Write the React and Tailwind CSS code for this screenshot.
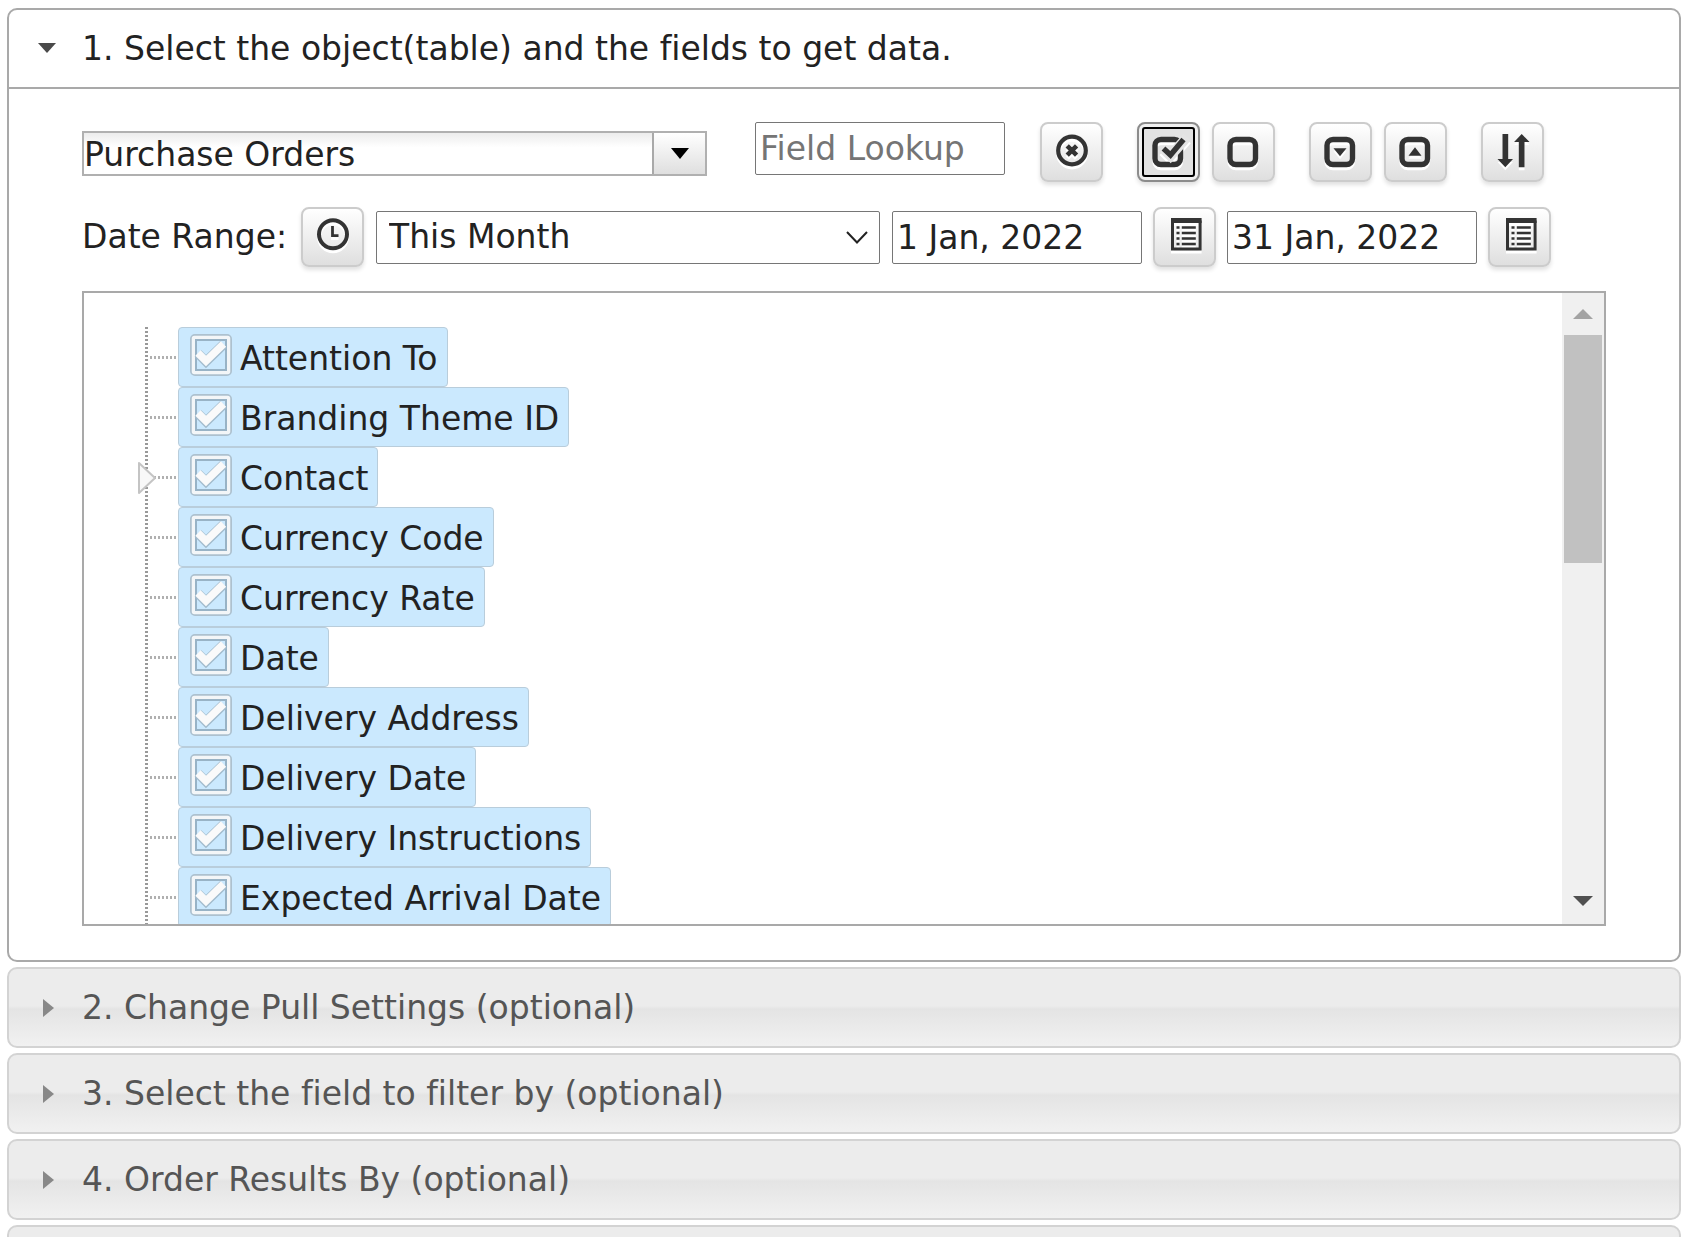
import { useRef, useState } from "react";
import clsx from "clsx";

const fields = [
  { name: "Attention To" },
  { name: "Branding Theme ID" },
  { name: "Contact", expandable: true },
  { name: "Currency Code" },
  { name: "Currency Rate" },
  { name: "Date" },
  { name: "Delivery Address" },
  { name: "Delivery Date" },
  { name: "Delivery Instructions" },
  { name: "Expected Arrival Date" },
];

const sections = [
  "2. Change Pull Settings (optional)",
  "3. Select the field to filter by (optional)",
  "4. Order Results By (optional)",
  "",
];

const icons = {
  clear: (
    <g fill="none" stroke="#333">
      <circle cx="18" cy="17.5" r="13.8" strokeWidth="4.2" />
      <path d="M13.2 12.8l9.400 9.400M22.600 12.800l-9.400 9.400" strokeWidth="4.6" />
    </g>
  ),
  checkAll: (
    <g fill="none">
      <rect x="4" y="6.5" width="25.5" height="25" rx="6" stroke="#333" strokeWidth="5.4" />
      <path d="M12 15.5l7.5 7.5L36 4" stroke="#e4e4e4" strokeWidth="10" />
      <path d="M12.5 15.5l7 6.5L32.5 6.5" stroke="#333" strokeWidth="5.5" />
    </g>
  ),
  uncheckAll: <rect x="4" y="6.5" width="25.5" height="25" rx="6" fill="none" stroke="#333" strokeWidth="5.4" />,
  expand: (
    <g>
      <rect x="4" y="6.5" width="25.5" height="25" rx="6" fill="none" stroke="#333" strokeWidth="5.4" />
      <path d="M10.5 15.3h13L17 23.3z" fill="#333" />
    </g>
  ),
  collapse: (
    <g>
      <rect x="4" y="6.5" width="25.5" height="25" rx="6" fill="none" stroke="#333" strokeWidth="5.4" />
      <path d="M10.5 22.7h13L17 14.3z" fill="#333" />
    </g>
  ),
  sort: (
    <path
      d="M7.5 1h5.7v25h4.8l-7.7 8.3L2.5 26h5zM23.8 34.3V9h-4.7l7.6-8 7.8 8h-5v25.3z"
      fill="#333"
    />
  ),
  clock: (
    <g fill="none" stroke="#333">
      <circle cx="18" cy="16.2" r="14" strokeWidth="4" />
      <path d="M17.5 8v9.7h6" strokeWidth="2.8" />
    </g>
  ),
  calendar: (
    <g fill="none" stroke="#333">
      <path d="M5.5 2.5v28.5h27.6V2.5" strokeWidth="3" />
      <path d="M4 2.5h30.600" strokeWidth="5" />
      <path d="M9.500 9.500h3M9.500 15h3M9.500 20.500h3M9.500 26h3" strokeWidth="2.6" />
      <path d="M14.800 9.500h14M14.800 15h14M14.800 20.500h14M14.800 26h14" strokeWidth="2.6" />
    </g>
  ),
};

function IconButton({ icon, label, active, onClick }) {
  return (
    <button
      type="button"
      aria-label={label}
      onClick={onClick}
      className={clsx(
        "flex h-[60px] w-[63px] shrink-0 items-center justify-center rounded-lg border-2 pb-[2px] shadow-[0_3px_4px_rgba(0,0,0,0.12)]",
        active
          ? "border-[#8c8c8c] bg-[#e2e2e2] outline-2 -outline-offset-[7px] outline-black inset-ring-3 inset-ring-[#f0f0f0]"
          : "border-[#cccccc] bg-linear-to-b from-white to-[#dfdfdf]"
      )}
    >
      <svg viewBox="0 0 36 36" className="size-9 overflow-visible drop-shadow-[0_3px_0_#ffffff]">
        {icons[icon]}
      </svg>
    </button>
  );
}

function TextBox({ className, ...props }) {
  return (
    <input
      type="text"
      className={clsx(
        "h-[53px] w-[250px] rounded-[2px] border border-[#767676] bg-white px-1 text-[#222222] placeholder:text-[#757575]",
        className
      )}
      {...props}
    />
  );
}

function CheckMark({ checked }) {
  return (
    <svg viewBox="0 1 42 42" className="pointer-events-none relative size-[42px] overflow-visible">
      <rect x="1" y="0" width="40" height="40" rx="4" fill="none" stroke="#adc1cf" strokeWidth="2" />
      <rect x="3.5" y="2.5" width="35" height="35" rx="1" fill="none" stroke="#f3f6f8" strokeWidth="3.5" />
      <rect x="6" y="5" width="30" height="30" fill="none" stroke="#98b3c6" strokeWidth="2" />
      {checked && (
        <g fill="none">
          <path d="M8 18.5l8 8 17.500-17" stroke="#a3bccd" strokeWidth="9.5" />
          <path d="M8 18l8 8L33.500 9" stroke="#fafafa" strokeWidth="7.5" />
        </g>
      )}
    </svg>
  );
}

function Field({ name, expandable, checked, onChange }) {
  return (
    <li className="relative flex h-[60px] items-center">
      <span className="w-[3px] self-stretch bg-[repeating-linear-gradient(to_bottom,#999999_0_2px,transparent_2px_4px)]" />
      <span className="h-[3px] w-[30px] bg-[repeating-linear-gradient(to_right,transparent_0_2px,#b0b0b0_2px_4px)]" />
      {expandable && (
        <button type="button" aria-label={`Expand ${name}`} className="absolute -left-2 top-3 h-9 w-5">
          <svg viewBox="0 0 20 36" className="h-9 w-5">
            <path d="M2 4v30L18 19z" fill="#f8f8f8" stroke="#c4c4c4" strokeWidth="2" strokeLinejoin="round" />
          </svg>
        </button>
      )}
      <label className="flex h-[60px] items-center gap-2 rounded border border-[#b9cddb] bg-[#cbe9fe] pr-[9px] pl-[11px]">
        <span className="relative size-[42px]">
          <input
            type="checkbox"
            checked={checked}
            onChange={onChange}
            className="absolute inset-0 size-full appearance-none"
          />
          <CheckMark checked={checked} />
        </span>
        <span className="pt-[3px]">{name}</span>
      </label>
    </li>
  );
}

function ScrollBar({ onStep }) {
  return (
    <div className="flex w-[42px] flex-col bg-[#f0f0f0]">
      <button type="button" aria-label="Scroll up" onClick={() => onStep(-60)} className="flex h-[42px] items-center justify-center">
        <svg viewBox="0 0 20 10" className="h-[10px] w-5">
          <path d="M0 10L10 0l10 10z" fill="#a3a3a3" />
        </svg>
      </button>
      <div className="flex-1 px-[2px]">
        <div className="h-[228px] bg-[#c1c1c1]" />
      </div>
      <button type="button" aria-label="Scroll down" onClick={() => onStep(60)} className="flex h-[42px] items-center justify-center pb-1">
        <svg viewBox="0 0 20 10" className="h-[10px] w-5">
          <path d="M0 0h20L10 10z" fill="#505050" />
        </svg>
      </button>
    </div>
  );
}

export default function App() {
  const [checked, setChecked] = useState(() => fields.map(() => true));
  const listRef = useRef(null);

  const toggle = (index) => setChecked(prev => prev.map((c, i) => (i === index ? !c : c)));
  const setAll = (value) => setChecked(fields.map(() => value));

  return (
    <div className="flex h-screen flex-col gap-[5px] overflow-hidden bg-white pt-2 pr-2 pl-[7px] font-['Verdana','DejaVu_Sans',sans-serif] text-[33px] leading-[40px] whitespace-nowrap text-[#222222] [font-variant-ligatures:none]">
      <section className="shrink-0 rounded-[10px] border-2 border-[#a9a9a9] bg-white">
        <h3 className="border-b-2 border-[#a9a9a9]">
          <button type="button" aria-expanded="true" className="flex h-[77px] w-full items-center gap-[26px] pl-[29px]">
            <svg viewBox="0 0 18 20" className="h-5 w-[18px]">
              <path d="M0 4h18L9 14z" fill="#4a4a4a" />
            </svg>
            <span>1. Select the object(table) and the fields to get data.</span>
          </button>
        </h3>

        <div className="px-[73px] pt-[33px] pb-[34px]">
          <div className="mb-[25px] flex items-start">
            <div className="mr-12 flex h-[60px] w-[625px] items-end pb-[6px]">
              <div className="flex h-[45px] w-full border-2 border-[#b0b0b0]">
                <input
                  type="text"
                  aria-label="Object"
                  defaultValue="Purchase Orders"
                  className="min-w-0 flex-1 bg-linear-to-b from-[#ececec] to-white to-35% pt-[2px]"
                />
                <button
                  type="button"
                  aria-label="Show all objects"
                  className="flex w-[53px] items-center justify-center border-l-2 border-[#a9a9a9] bg-linear-to-b from-white to-[#dfdfdf]"
                >
                  <svg viewBox="0 0 18 11" className="h-[11px] w-[18px]">
                    <path d="M0 0h18L9 11z" fill="#000" />
                  </svg>
                </button>
              </div>
            </div>
            <TextBox placeholder="Field Lookup" aria-label="Field Lookup" className="mr-[35px]" />
            <div className="flex gap-[34px]">
              <IconButton icon="clear" label="Clear lookup" />
              <div className="flex gap-3">
                <IconButton icon="checkAll" label="Check all" active onClick={() => setAll(true)} />
                <IconButton icon="uncheckAll" label="Uncheck all" onClick={() => setAll(false)} />
              </div>
              <div className="flex gap-3">
                <IconButton icon="expand" label="Expand all" />
                <IconButton icon="collapse" label="Collapse all" />
              </div>
              <IconButton icon="sort" label="Sort fields" />
            </div>
          </div>

          <div className="mb-6 flex items-center gap-3">
            <label htmlFor="range" className="w-[207px]">Date Range:</label>
            <IconButton icon="clock" label="Time" />
            <div className="relative">
              <select
                id="range"
                className="block h-[53px] w-[504px] appearance-none rounded-[2px] border border-[#767676] bg-white pl-3"
              >
                <option>This Month</option>
              </select>
              <svg viewBox="0 0 22 14" className="pointer-events-none absolute top-5 right-3 h-[14px] w-[22px]">
                <path d="M1 1l10 10.500L21 1" fill="none" stroke="#222" strokeWidth="2" />
              </svg>
            </div>
            <div className="flex items-center gap-[11px]">
              <TextBox defaultValue="1 Jan, 2022" aria-label="From date" />
              <IconButton icon="calendar" label="Pick from date" />
              <TextBox defaultValue="31 Jan, 2022" aria-label="To date" />
              <IconButton icon="calendar" label="Pick to date" />
            </div>
          </div>

          <div className="flex h-[635px] border-2 border-[#a9a9a9]">
            <ul ref={listRef} className="flex-1 overflow-y-auto pt-[34px] pl-[61px] [scrollbar-width:none]">
              {fields.map((field, i) => (
                <Field key={field.name} {...field} checked={checked[i]} onChange={() => toggle(i)} />
              ))}
            </ul>
            <ScrollBar onStep={top => listRef.current.scrollBy({ top })} />
          </div>
        </div>
      </section>

      {sections.map((title, i) => (
        <h3 key={i} className="shrink-0">
          <button
            type="button"
            aria-expanded="false"
            className="flex h-[81px] w-full items-center gap-[26px] rounded-[10px] border-2 border-[#d3d3d3] bg-[linear-gradient(to_bottom,#ececec_48%,#e4e4e4_52%,#f1f1f1)] pl-[29px] text-[#555555]"
          >
            <svg viewBox="0 0 18 20" className="h-5 w-[18px]">
              <path d="M5 1v18l11-9z" fill="#888" />
            </svg>
            <span>{title}</span>
          </button>
        </h3>
      ))}
    </div>
  );
}
